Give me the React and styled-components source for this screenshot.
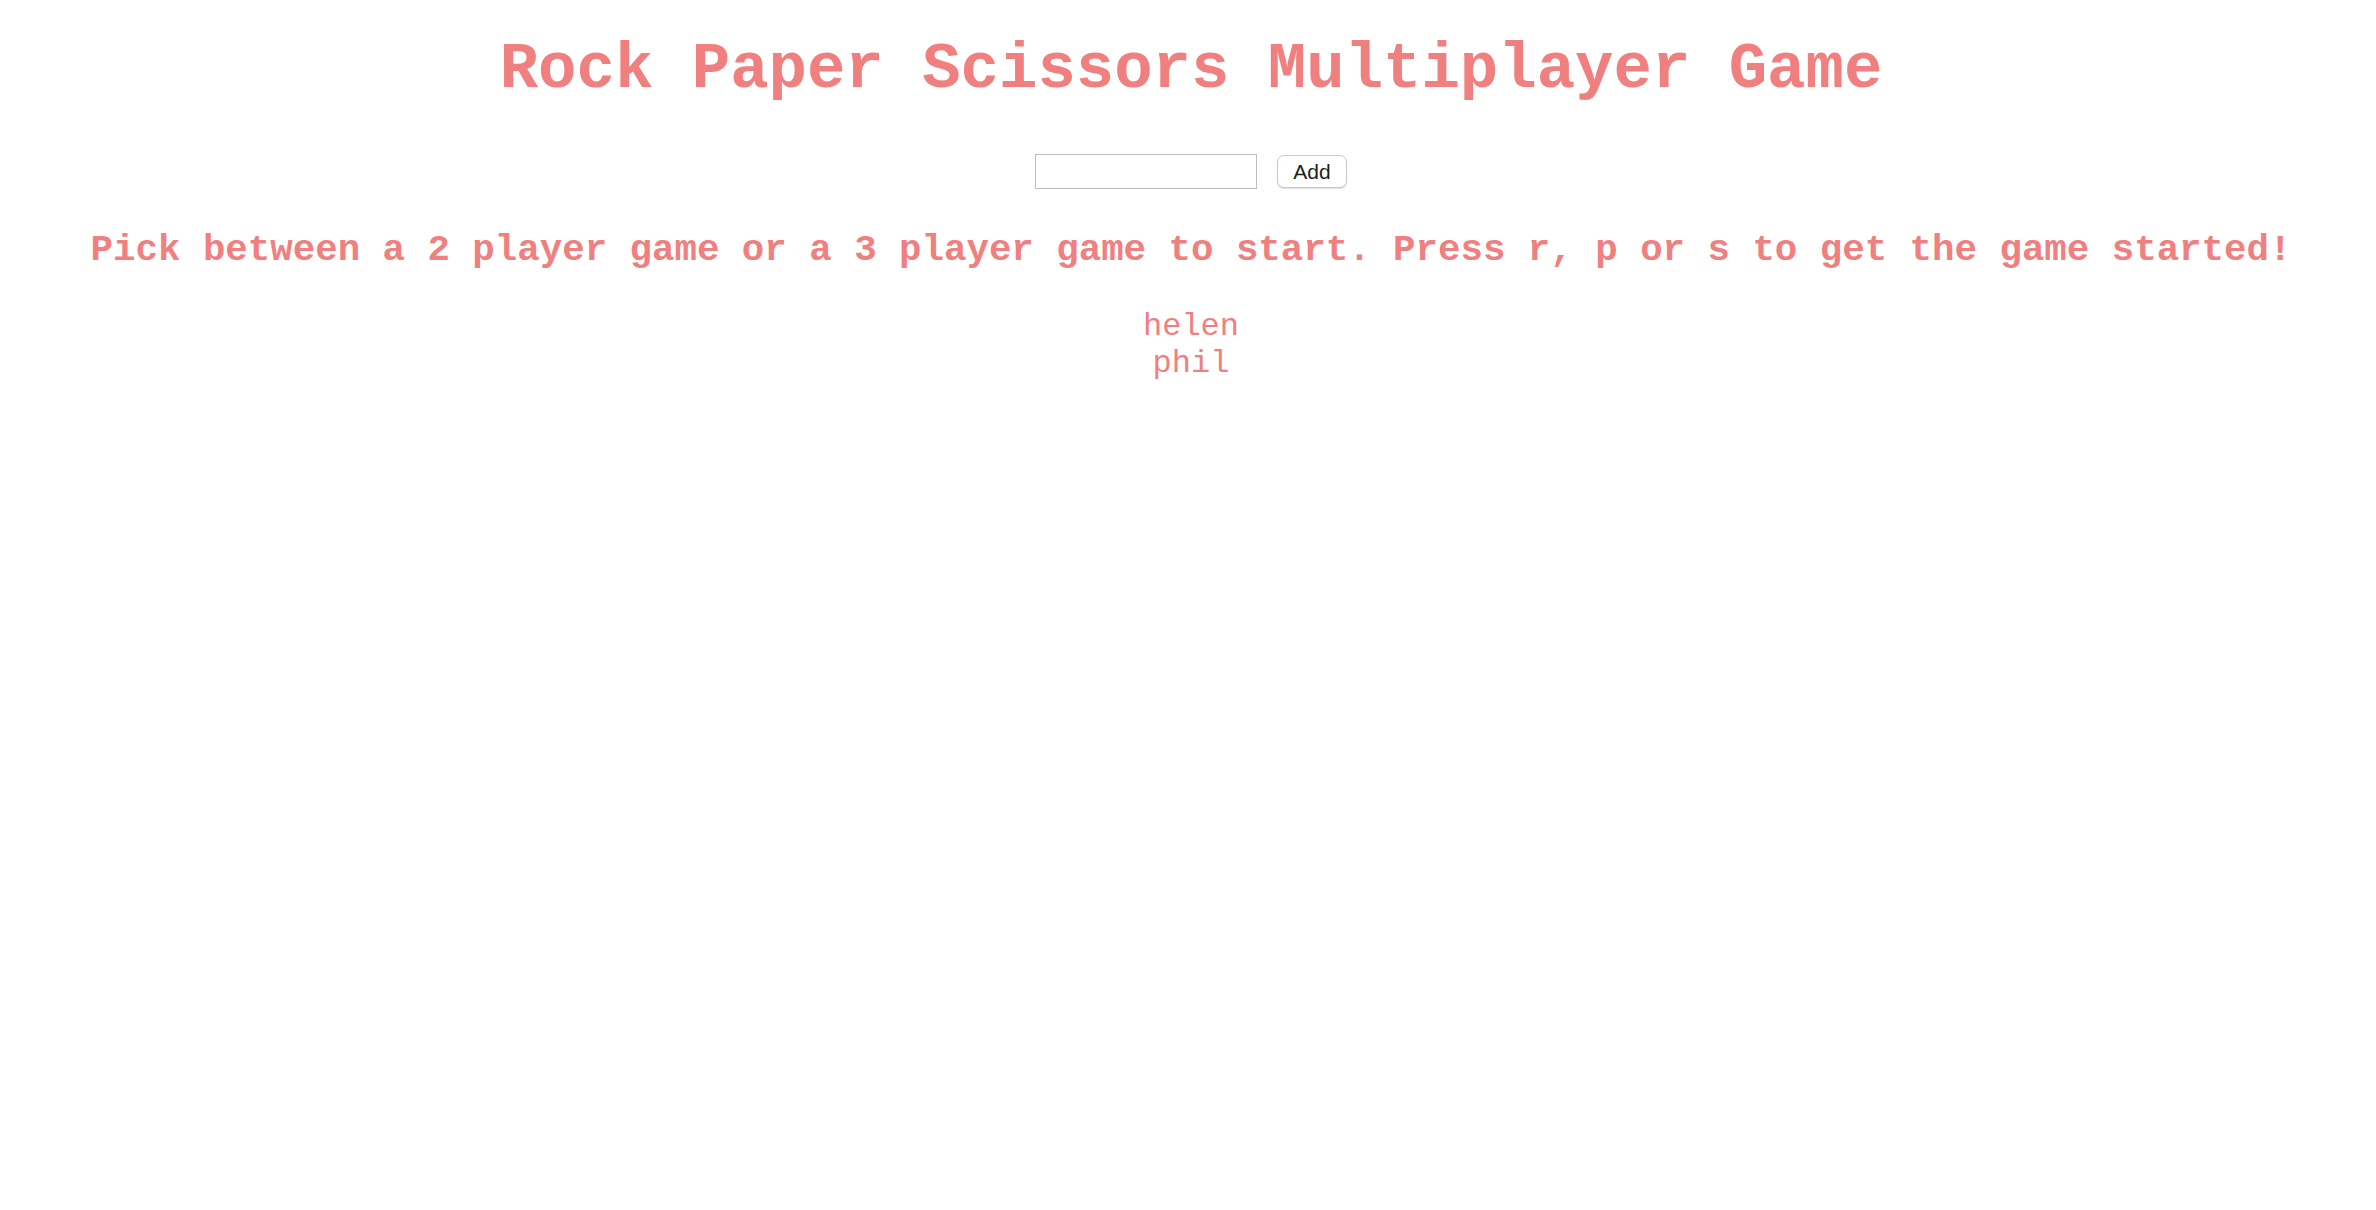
import React, { useState } from "react";
import styled, { createGlobalStyle } from "styled-components";

const Global = createGlobalStyle`
  html, body { margin: 0; padding: 0; background: #ffffff; }
  body { font-family: "Courier New", "Liberation Mono", monospace; }
`;

const Page = styled.div`
  display: flex;
  flex-direction: column;
  align-items: center;
  padding: 2px 0 0 6px;
  color: lightcoral;
  font-family: "Courier New", "Liberation Mono", monospace;
`;

const Title = styled.h1`
  margin: 32px 0 0;
  font-size: 64px;
  font-weight: bold;
  line-height: normal;
  text-align: center;
`;

const Form = styled.form`
  display: flex;
  align-items: center;
  gap: 20px;
  margin-top: 48px;
`;

const Input = styled.input`
  box-sizing: border-box;
  width: 222px;
  height: 35px;
  border: 1px solid #bdbdbd;
  border-radius: 0;
  padding: 2px 6px;
  font-size: 20px;
  font-family: "Liberation Sans", Arial, sans-serif;
  outline: none;
  background: #fff;
`;

const Button = styled.button`
  box-sizing: border-box;
  width: 70px;
  height: 33px;
  border: 1px solid #c8c8c8;
  border-radius: 7px;
  background: #ffffff;
  box-shadow: 0 1px 1px rgba(0, 0, 0, 0.12);
  color: #1e1e1e;
  font-family: "Liberation Sans", Arial, sans-serif;
  font-size: 21px;
  padding: 0;
  line-height: 1;
`;

const Instructions = styled.h3`
  margin: 40px 0 0;
  font-size: 37.44px;
  font-weight: bold;
  line-height: normal;
  text-align: center;
  white-space: nowrap;
`;

const PlayerList = styled.div`
  display: flex;
  flex-direction: column;
  align-items: center;
  margin-top: 38px;
`;

const Player = styled.div`
  font-size: 32px;
  line-height: 36.5px;
  color: lightcoral;
`;

export default function App() {
  const [name, setName] = useState("");
  const [players, setPlayers] = useState(["helen", "phil"]);
  const add = (e) => {
    e.preventDefault();
    if (name.trim()) {
      setPlayers([...players, name.trim()]);
      setName("");
    }
  };
  return (
    <>
      <Global />
      <Page>
        <Title>Rock Paper Scissors Multiplayer Game</Title>
        <Form onSubmit={add}>
          <Input value={name} onChange={(e) => setName(e.target.value)} />
          <Button type="submit">Add</Button>
        </Form>
        <Instructions>
          Pick between a 2 player game or a 3 player game to start. Press r, p or s to get the game started!
        </Instructions>
        <PlayerList>
          {players.map((p) => (
            <Player key={p}>{p}</Player>
          ))}
        </PlayerList>
      </Page>
    </>
  );
}
